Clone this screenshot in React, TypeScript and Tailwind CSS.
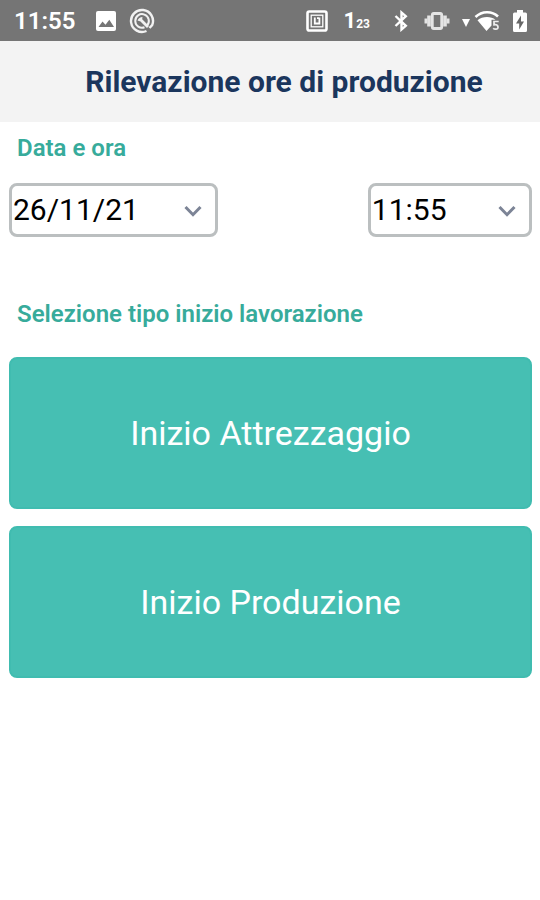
import React, { useState, ReactNode } from 'react';

interface SelectFieldProps {
    label: string;
    value: string;
    options: string[];
    className: string;
    onChange: (value: string) => void;
}

function SelectField({
    label,
    value,
    options,
    className,
    onChange,
}: SelectFieldProps) {
    return (
        <div className={`grid items-center ${className}`}>
            <select
                aria-label={label}
                value={value}
                onChange={(e) => onChange(e.target.value)}
                className="col-start-1 row-start-1 h-[54px] w-full appearance-none rounded-lg border-3 border-[#bbbfc0] bg-white pb-px pl-px text-3xl text-black"
            >
                {options.map((option) => (
                    <option key={option}>{option}</option>
                ))}
            </select>
            <svg
                viewBox="0 0 18 14"
                className="pointer-events-none col-start-1 row-start-1 mr-4 h-[14px] w-[18px] justify-self-end"
                fill="none"
                stroke="#7c8496"
                strokeWidth="3"
            >
                <path d="M1.5 4 9 11.7 16.5 4" />
            </svg>
        </div>
    );
}

function ActionButton({ children }: { children: ReactNode }) {
    return (
        <button
            type="button"
            className="h-[152px] w-full rounded-lg border-2 border-[#40bcb0] bg-[#46bfb3] text-[34px] text-white"
        >
            {children}
        </button>
    );
}

function StatusBar() {
    return (
        <div className="flex h-[41px] items-center justify-between bg-[#757575] pr-3 pl-[14px] text-white">
            <div className="flex items-center">
                <span className="text-2xl font-semibold">11:55</span>
                {/* picture */}
                <svg viewBox="0 0 22 22" className="ml-5 size-[22px]">
                    <rect x="1" y="1" width="20" height="20" rx="2" fill="#fff" />
                    <path d="m3.5 17 4-5.5 3 3.3 3.8-5L19 17z" fill="#757575" />
                </svg>
                {/* ring with magnifier */}
                <svg
                    viewBox="0 0 26 26"
                    className="ml-3 size-[26px]"
                    fill="none"
                    stroke="#f2f2f2"
                >
                    <path
                        d="M17.5 23A11 11 0 1 1 23.2 17.1L20.5 20"
                        strokeWidth="2.4"
                    />
                    <path
                        d="M18.2 17.4A6.8 6.8 0 1 0 15.5 19.3"
                        strokeWidth="2"
                    />
                    <path
                        d="M8.5 12.5q1.5-3.5 5-3.5l-.3 2.3 6.8 6.7-2 2-6.5-6.5z"
                        fill="#f2f2f2"
                        stroke="none"
                    />
                </svg>
            </div>
            <div className="flex items-center">
                {/* nfc */}
                <svg
                    viewBox="0 0 22 22"
                    className="size-[22px]"
                    fill="none"
                    stroke="#fff"
                >
                    <rect
                        x="1.5"
                        y="1.5"
                        width="19"
                        height="19"
                        rx="1.8"
                        strokeWidth="2.6"
                    />
                    <rect x="5.2" y="5.2" width="11.6" height="11.6" strokeWidth="1.3" />
                    <path d="M8.8 7.5v6h4.6v-6M11 8.2h2" strokeWidth="1.8" />
                </svg>
                <span className="ml-4 flex items-baseline leading-none font-bold">
                    <span className="text-[22px]">1</span>
                    <span className="text-xs">23</span>
                </span>
                {/* bluetooth */}
                <svg
                    viewBox="0 0 14 22"
                    className="ml-6 h-[22px] w-[14px]"
                    fill="none"
                    stroke="#fff"
                    strokeWidth="2.4"
                >
                    <path d="m1.5 6 10.3 9.8-4.3 3.7v-17l4.3 3.7L1.5 16" />
                </svg>
                {/* vibration */}
                <svg
                    viewBox="0 0 26 20"
                    className="ml-4 h-5 w-[26px]"
                    fill="none"
                    stroke="#e4e4e4"
                >
                    <rect
                        x="8.3"
                        y="2.5"
                        width="9.4"
                        height="15"
                        rx="1.5"
                        strokeWidth="2.8"
                    />
                    <path d="M5 4.5v11M21 4.5v11" strokeWidth="3.6" />
                    <path d="M2 7.5v5M24 7.5v5" strokeWidth="3" />
                </svg>
                <svg viewBox="0 0 8 8" className="mt-1 ml-3 size-2" fill="#fff">
                    <path d="M0 0h8L4 8z" />
                </svg>
                {/* wifi */}
                <svg viewBox="0 0 26 22" className="ml-1 h-[22px] w-[26px]">
                    <path
                        d="M1.5 7C8 .7 18 .7 24 6.5"
                        fill="none"
                        stroke="#fff"
                        strokeWidth="2.6"
                    />
                    <path
                        d="M3.5 10.3C8.5 6 17 6 21.5 9.8h-4v5.7l-5 5.5z"
                        fill="#fff"
                    />
                    <path
                        d="M24.7 11.5H20v3.3c4.8-.8 5.2 4.4 1.8 4.4-1.2 0-2-.3-2.6-1"
                        fill="none"
                        stroke="#eee"
                        strokeWidth="1.7"
                    />
                </svg>
                {/* battery */}
                <svg viewBox="0 0 16 24" className="ml-3 h-6 w-4">
                    <path
                        d="M5 1h6v2.5h2.5q1.5 0 1.5 1.5v16.5q0 1.5-1.5 1.5h-11Q1 23 1 21.5V5q0-1.500 1.5-1.500H5z"
                        fill="#fff"
                    />
                    <path d="M9 6.5 4 14.5h3.2v6l4.8-8H9z" fill="#666" />
                </svg>
            </div>
        </div>
    );
}

export default function App() {
    const [date, setDate] = useState<string>('26/11/21');
    const [time, setTime] = useState<string>('11:55');

    return (
        <div className="min-h-screen bg-white font-[Roboto,sans-serif]">
            <StatusBar />
            <header className="flex h-[81px] items-center justify-center bg-[#f3f3f3] pl-7">
                <h1 className="text-3xl font-bold text-[#1b365d]">
                    Rilevazione ore di produzione
                </h1>
            </header>
            <main className="pt-2.5 pr-2 pl-[9px]">
                <section>
                    <h2 className="px-2 text-2xl font-semibold text-[#37ab9b]">
                        Data e ora
                    </h2>
                    <div className="mt-[19px] flex justify-between">
                        <SelectField
                            label="Data"
                            value={date}
                            options={['26/11/21', '25/11/21', '24/11/21']}
                            className="w-2/5"
                            onChange={setDate}
                        />
                        <SelectField
                            label="Ora"
                            value={time}
                            options={['11:55', '12:00', '12:05']}
                            className="w-[31.4%]"
                            onChange={setTime}
                        />
                    </div>
                </section>
                <section className="mt-[61px]">
                    <h2 className="px-2 text-2xl font-semibold text-[#37ab9b]">
                        Selezione tipo inizio lavorazione
                    </h2>
                    <div className="mt-[27px] flex flex-col gap-[17px]">
                        <ActionButton>Inizio Attrezzaggio</ActionButton>
                        <ActionButton>Inizio Produzione</ActionButton>
                    </div>
                </section>
            </main>
        </div>
    );
}
